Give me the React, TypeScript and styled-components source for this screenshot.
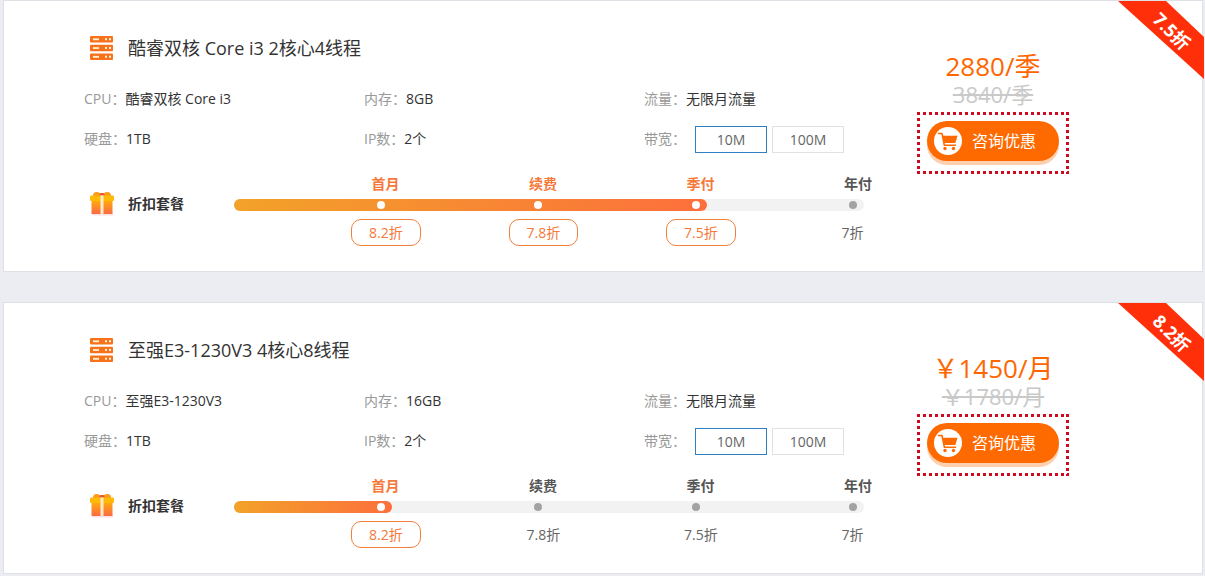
import React, { useId, useState } from 'react';
import styled, { createGlobalStyle } from 'styled-components';

const GlobalStyle = createGlobalStyle`
  *, *::before, *::after { box-sizing: border-box; }
  body {
    margin: 0;
    background: #ecedf3;
    color: #333;
    font: 14px/20px "Open Sans", "Noto Sans CJK SC", sans-serif;
  }
  dl, dd, ul, h2, h3, p, fieldset { margin: 0; padding: 0; }
  svg { flex: none; }
`;

const Page = styled.main`
  display: flex;
  flex-direction: column;
  gap: 30px;
  padding: 0 2px 2px 3px;
`;

const Card = styled.article`
  position: relative;
  display: flex;
  align-items: flex-start;
  padding: 0 133px 25px 80px;
  background: #fff;
  border: 1px solid #dfe0e5;
`;

const Details = styled.div`
  flex: 1;
  min-width: 0;
`;

const Heading = styled.header`
  display: flex;
  align-items: center;
  gap: 14px;
  padding: 33px 0 0 5px;
  height: 61px;
`;

const Title = styled.h2`
  font-size: 18px;
  line-height: 28px;
  font-weight: 400;
`;

const Specs = styled.dl`
  display: grid;
  grid-template-columns: 1fr 1fr 273px;
  grid-auto-rows: 40px;
  margin-top: 17px;
`;

const Spec = styled.div`
  display: flex;
  align-items: center;
  white-space: nowrap;
`;

const Term = styled.dt`
  color: #999;
`;

const Value = styled.dd``;

const Options = styled.fieldset`
  display: flex;
  gap: 5px;
  margin-left: 9px;
  border: 0;
`;

const Option = styled.label<{ $on: boolean }>`
  width: 72px;
  height: 27px;
  line-height: 25px;
  text-align: center;
  color: #666;
  border: 1px solid ${p => (p.$on ? '#2f80c3' : '#e1e1e1')};
  cursor: pointer;
`;

const Radio = styled.input`
  position: absolute;
  opacity: 0;
  margin: 0;
`;

const Discounts = styled.section`
  display: flex;
  margin: 15px 53px 0 0;
`;

const DiscountTitle = styled.h3`
  flex: none;
  display: flex;
  align-items: center;
  gap: 13px;
  width: 150px;
  height: 60px;
  padding-left: 5px;
  font-size: 14px;
  font-weight: 700;
  white-space: nowrap;
`;

const Timeline = styled.ul`
  flex: 1;
  display: grid;
  grid-template-columns: repeat(4, minmax(0, 1fr));
  grid-template-rows: 25px 12px 35px;
  list-style: none;
`;

const Track = styled.li`
  grid-area: 2 / 1 / 3 / -1;
  border-radius: 6px;
  background: #f2f2f2;
`;

const Fill = styled.li<{ $steps: number }>`
  grid-row: 2;
  grid-column: 1 / span ${p => p.$steps};
  border-radius: 6px;
  background: linear-gradient(90deg, #f2a229, #fd6f3c);
`;

const Step = styled.li`
  display: contents;
`;

const Period = styled.strong<{ $on: boolean; $col: number }>`
  grid-area: 1 / ${p => p.$col};
  justify-self: end;
  margin-right: -8px;
  color: ${p => (p.$on ? '#f5793a' : '#555')};
`;

const Dot = styled.span<{ $on: boolean; $col: number }>`
  grid-area: 2 / ${p => p.$col};
  align-self: center;
  justify-self: end;
  width: 8px;
  height: 8px;
  margin-right: 7px;
  border-radius: 50%;
  background: ${p => (p.$on ? '#fff' : '#a3a3a3')};
`;

const Rate = styled.span<{ $on: boolean; $col: number }>`
  grid-area: 3 / ${p => p.$col};
  align-self: end;
  justify-self: start;
  height: 27px;
  margin-left: 117px;
  padding: 0 17px;
  line-height: 25px;
  white-space: nowrap;
  border: 1px solid ${p => (p.$on ? '#f0803c' : 'transparent')};
  border-radius: 10px;
  color: ${p => (p.$on ? '#f5793a' : '#666')};
`;

const Offer = styled.aside`
  flex: none;
  width: 152px;
  padding-top: 50px;
  display: flex;
  flex-direction: column;
  align-items: center;
  white-space: nowrap;
`;

const Price = styled.p`
  font-size: 26px;
  line-height: 30px;
  color: #ff6600;
`;

const OldPrice = styled.del`
  font-size: 22px;
  line-height: 26px;
  color: #c9c9c9;
`;

const Highlight = styled.div`
  width: 152px;
  height: 62px;
  margin-top: 5px;
  padding: 9px 10px;
  background:
    repeating-linear-gradient(90deg, #cf0a1e 0 3px, transparent 3px 6px) top / 100% 3px no-repeat,
    repeating-linear-gradient(90deg, #cf0a1e 0 3px, transparent 3px 6px) bottom / 100% 3px no-repeat,
    repeating-linear-gradient(180deg, #cf0a1e 0 3px, transparent 3px 6px) left / 3px 100% no-repeat,
    repeating-linear-gradient(180deg, #cf0a1e 0 3px, transparent 3px 6px) right / 3px 100% no-repeat;
`;

const AskButton = styled.button`
  display: flex;
  align-items: center;
  gap: 10px;
  width: 132px;
  height: 40px;
  padding: 0 7px;
  border: 0;
  border-radius: 20px;
  background: #ff6a00;
  box-shadow: 0 4px 0 #ffd0b0;
  color: #fff;
  font: inherit;
  font-size: 16px;
  white-space: nowrap;
  cursor: pointer;
`;

const Ribbon = styled.div`
  position: absolute;
  top: 0;
  right: -2px;
  width: 86px;
  height: 78px;
  padding: 17px 10px 0 32px;
  background: #ff3009;
  clip-path: polygon(0 0, 48px 0, 100% 36px, 100% 100%);
`;

const RibbonText = styled.span`
  display: block;
  width: 44px;
  text-align: center;
  font-size: 18px;
  line-height: 26px;
  font-weight: 700;
  color: #fff;
  transform: rotate(45deg);
`;

const ServerIcon = () => (
  <svg width="25" height="24" viewBox="0 0 25 24" aria-hidden="true">
    {[0, 8.75, 17.5].map(y => (
      <g key={y} transform={`translate(0 ${y})`}>
        <rect x="1" width="23" height="6.5" rx="1" fill="#f8721c" />
        <rect x="4" y="2.4" width="6" height="1.8" fill="#fff3d8" />
        <rect x="16" y="2.2" width="2" height="2" fill="#fff3d8" />
        <rect x="20" y="2.2" width="2" height="2" fill="#fff3d8" />
      </g>
    ))}
  </svg>
);

const GiftIcon = () => {
  const id = useId();
  return (
    <svg width="26" height="26" viewBox="0 0 26 26" aria-hidden="true">
      <defs>
        <linearGradient id={id} x1="0" y1="0" x2="0" y2="1">
          <stop offset="0" stopColor="#ffad0a" />
          <stop offset="1" stopColor="#fa6a45" />
        </linearGradient>
      </defs>
      <rect x="3" y="22" width="21" height="2.5" rx="1" fill="#fde0e2" />
      <path d="M4 5Q4 1 7.5 1Q11 1 13 4Q15 1 18.5 1Q22 1 22 5Z" fill="#fb9a1b" />
      <path d="M10 4.5L11.5 2H14.5L16 4.5Z" fill="#e8542f" />
      <rect x="2.5" y="9" width="21" height="14" fill={`url(#${id})`} />
      <rect x="1" y="4.5" width="24" height="5.5" rx="1" fill="#ffb908" />
      <rect x="11.5" y="4.5" width="3" height="18.5" fill="#ffe9c9" />
    </svg>
  );
};

const CartIcon = () => (
  <svg width="28" height="28" viewBox="0 0 28 28" aria-hidden="true">
    <circle cx="14" cy="14" r="14" fill="#fff" />
    <path d="M4.5 6.5H8L10.4 18.300H21.500" fill="none" stroke="#ff6a00" strokeWidth="1.6" strokeLinecap="round" strokeLinejoin="round" />
    <path d="M8.500 8.800H23.500L21.400 16H10.200Z" fill="#ff6a00" />
    <circle cx="11" cy="21.500" r="1.700" fill="#ff6a00" />
    <circle cx="19.500" cy="21.500" r="1.700" fill="#ff6a00" />
  </svg>
);

interface Plan {
  name: string;
  cpu: string;
  memory: string;
  price: string;
  oldPrice: string;
  reached: number;
}

const STEPS = [
  { period: '首月', rate: '8.2折' },
  { period: '续费', rate: '7.8折' },
  { period: '季付', rate: '7.5折' },
  { period: '年付', rate: '7折' },
];

const PLANS: Plan[] = [
  { name: '酷睿双核 Core i3 2核心4线程', cpu: '酷睿双核 Core i3', memory: '8GB', price: '2880/季', oldPrice: '3840/季', reached: 3 },
  { name: '至强E3-1230V3 4核心8线程', cpu: '至强E3-1230V3', memory: '16GB', price: '￥1450/月', oldPrice: '￥1780/月', reached: 1 },
];

const PlanCard = ({ plan }: { plan: Plan }) => {
  const group = useId();
  const [bandwidth, setBandwidth] = useState('10M');
  const specs = [
    ['CPU：', plan.cpu],
    ['内存：', plan.memory],
    ['流量：', '无限月流量'],
    ['硬盘：', '1TB'],
    ['IP数：', '2个'],
  ];
  return (
    <Card>
      <Details>
        <Heading>
          <ServerIcon />
          <Title>{plan.name}</Title>
        </Heading>
        <Specs>
          {specs.map(([term, value]) => (
            <Spec key={term}>
              <Term>{term}</Term>
              <Value>{value}</Value>
            </Spec>
          ))}
          <Spec>
            <Term>带宽：</Term>
            <Value>
              <Options aria-label="带宽">
                {['10M', '100M'].map(b => (
                  <Option key={b} $on={b === bandwidth}>
                    <Radio type="radio" name={group} checked={b === bandwidth} onChange={() => setBandwidth(b)} />
                    {b}
                  </Option>
                ))}
              </Options>
            </Value>
          </Spec>
        </Specs>
        <Discounts>
          <DiscountTitle>
            <GiftIcon />
            折扣套餐
          </DiscountTitle>
          <Timeline>
            <Track aria-hidden="true" />
            <Fill aria-hidden="true" $steps={plan.reached} />
            {STEPS.map((s, i) => {
              const on = i < plan.reached;
              return (
                <Step key={s.period}>
                  <Period $on={on} $col={i + 1}>{s.period}</Period>
                  <Dot $on={on} $col={i + 1} />
                  <Rate $on={on} $col={i + 1}>{s.rate}</Rate>
                </Step>
              );
            })}
          </Timeline>
        </Discounts>
      </Details>
      <Offer>
        <Price>{plan.price}</Price>
        <OldPrice>{plan.oldPrice}</OldPrice>
        <Highlight>
          <AskButton type="button">
            <CartIcon />
            咨询优惠
          </AskButton>
        </Highlight>
      </Offer>
      <Ribbon>
        <RibbonText>{STEPS[plan.reached === 3 ? 2 : 0].rate}</RibbonText>
      </Ribbon>
    </Card>
  );
};

export default function App() {
  return (
    <>
      <GlobalStyle />
      <Page>
        {PLANS.map(plan => (
          <PlanCard key={plan.name} plan={plan} />
        ))}
      </Page>
    </>
  );
}
